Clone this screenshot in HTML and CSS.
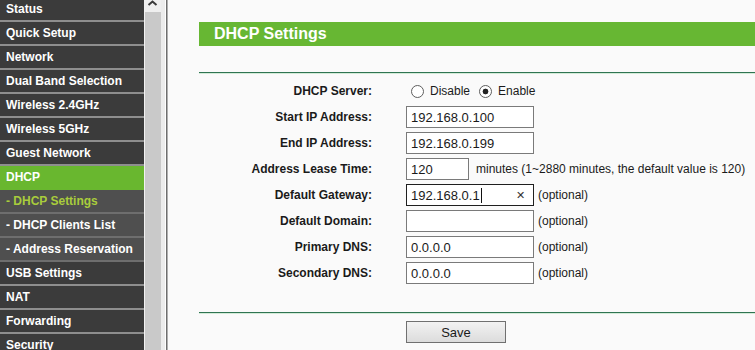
FILE: index.html
```html
<!DOCTYPE html>
<html lang="en">
<head>
    <meta charset="UTF-8">
    <meta name="viewport" content="width=device-width, initial-scale=1.0">
    <title>DHCP Settings</title>
    <link rel="stylesheet" href="styles.css">
</head>
<body>
    <div class="page">
        <nav class="menu">
            <a class="menu-item">Status</a>
            <a class="menu-item">Quick Setup</a>
            <a class="menu-item">Network</a>
            <a class="menu-item">Dual Band Selection</a>
            <a class="menu-item">Wireless 2.4GHz</a>
            <a class="menu-item">Wireless 5GHz</a>
            <a class="menu-item">Guest Network</a>
            <a class="menu-item active">DHCP</a>
            <a class="menu-item sub current">- DHCP Settings</a>
            <a class="menu-item sub">- DHCP Clients List</a>
            <a class="menu-item sub">- Address Reservation</a>
            <a class="menu-item">USB Settings</a>
            <a class="menu-item">NAT</a>
            <a class="menu-item">Forwarding</a>
            <a class="menu-item">Security</a>
        </nav>

        <div class="scrollbar">
            <div class="scroll-up">
                <svg width="15" height="12" viewBox="0 0 15 12">
                    <path d="M3.5 5 L7.5 1.5 L11.5 5" fill="none" stroke="#3a3a3a" stroke-width="2"/>
                </svg>
            </div>
            <div class="scroll-track"></div>
        </div>
        <div class="frame-edge"></div>

        <main class="content">
            <h2 class="title">DHCP Settings</h2>
            <div class="rule"></div>

            <form class="form">
                <label class="label">DHCP Server:</label>
                <div class="field">
                    <label class="radio"><input type="radio" name="server"> Disable</label>
                    <label class="radio"><input type="radio" name="server" checked> Enable</label>
                </div>

                <label class="label">Start IP Address:</label>
                <div class="field"><input class="text" type="text" value="192.168.0.100"></div>

                <label class="label">End IP Address:</label>
                <div class="field"><input class="text" type="text" value="192.168.0.199"></div>

                <label class="label">Address Lease Time:</label>
                <div class="field">
                    <input class="text short" type="text" value="120">
                    <span class="hint">minutes (1~2880 minutes, the default value is 120)</span>
                </div>

                <label class="label">Default Gateway:</label>
                <div class="field">
                    <div class="text focused">
                        <span class="value">192.168.0.1</span><span class="caret"></span>
                        <span class="clear">&#x2715;</span>
                    </div>
                    <span class="note">(optional)</span>
                </div>

                <label class="label">Default Domain:</label>
                <div class="field">
                    <input class="text" type="text" value="">
                    <span class="note">(optional)</span>
                </div>

                <label class="label">Primary DNS:</label>
                <div class="field">
                    <input class="text" type="text" value="0.0.0.0">
                    <span class="note">(optional)</span>
                </div>

                <label class="label">Secondary DNS:</label>
                <div class="field">
                    <input class="text" type="text" value="0.0.0.0">
                    <span class="note">(optional)</span>
                </div>
            </form>

            <div class="rule bottom"></div>
            <div class="actions">
                <button class="save" type="button">Save</button>
            </div>
        </main>
    </div>
</body>
</html>
```

FILE: styles.css
```css
body {
    margin: 0;
    font-family: 'Liberation Sans', Arial, sans-serif;
    font-size: 12px;
    color: #1a1a1a;
    background: #fafafa;
    overflow: hidden;
}

.page {
    display: flex;
    height: 350px;
    overflow: hidden;
}

/* left menu */
.menu {
    width: 144px;
    flex-shrink: 0;
    margin-top: -2px;
    background: #3b3b3b;
}

.menu-item {
    display: block;
    height: 22px;
    line-height: 22px;
    padding-left: 6px;
    border-bottom: 2px solid #8e8e8e;
    background: #3b3b3b;
    color: #fff;
    font-weight: bold;
    white-space: nowrap;
}

.menu-item.active {
    background: #69b72f;
    border-bottom-color: #69b72f;
}

.menu-item.sub {
    background: #4f4f4f;
    border-bottom-color: #6e6e6e;
}

.menu-item.current {
    color: #a9cc3c;
}

/* frame scrollbar */
.scrollbar {
    width: 16px;
    flex-shrink: 0;
    display: flex;
    flex-direction: column;
    border-left: 1px solid #f2f2f2;
    border-right: 4px solid #ececec;
}

.scroll-up {
    height: 12px;
    background: #efefef;
}

.scroll-up svg {
    display: block;
}

.scroll-track {
    flex: 1;
    background: #c9c9c9;
}

.frame-edge {
    width: 1px;
    flex-shrink: 0;
    background: #fff;
    border-right: 1px solid #6e6e6e;
    box-shadow: 1px 0 0 #b0b0b0;
}

/* content */
.content {
    flex: 1;
    padding: 22px 0 0 32px;
    min-width: 0;
}

.title {
    margin: 0;
    height: 24px;
    line-height: 24px;
    padding-left: 15px;
    background: #67b733;
    color: #fff;
    font-size: 16px;
    font-weight: bold;
}

.rule {
    margin-top: 26px;
    border-top: 1px solid #2f7452;
    border-bottom: 1px solid #d3ebd8;
}

.rule.bottom {
    margin-top: 26px;
}

.form {
    display: grid;
    grid-template-columns: 173px 1fr;
    grid-auto-rows: 26px;
    column-gap: 34px;
    margin-top: 4px;
}

.label {
    text-align: right;
    font-weight: bold;
    align-self: center;
}

.field {
    display: flex;
    align-items: center;
    white-space: nowrap;
}

.radio {
    display: flex;
    align-items: center;
    margin-right: 4px;
}

.radio input {
    appearance: none;
    width: 13px;
    height: 13px;
    margin: 0 6px 0 5px;
    border: 1px solid #5e5e5e;
    border-radius: 50%;
    background: #fff;
}

.radio input:checked {
    background: radial-gradient(circle, #222 0 2.6px, #fff 3.2px);
}

.text {
    box-sizing: border-box;
    width: 128px;
    height: 22px;
    margin: 0;
    padding: 0 4px;
    border: 1px solid #7a7a7a;
    background: #fff;
    font-family: 'Liberation Sans', Arial, sans-serif;
    font-size: 13px;
    color: #1a1a1a;
    outline: none;
}

.text.short {
    width: 63px;
}

.text.focused {
    display: flex;
    align-items: center;
    border-color: #1f1f1f;
}

.caret {
    width: 1px;
    height: 15px;
    margin-left: 1px;
    background: #111;
}

.clear {
    margin-left: auto;
    margin-right: 4px;
    font-size: 11px;
    color: #333;
}

.hint {
    margin-left: 7px;
}

.note {
    margin-left: 4px;
}

.actions {
    padding: 7px 0 0 207px;
}

.save {
    width: 100px;
    height: 22px;
    border: 1px solid #707070;
    background: linear-gradient(#f2f2f2, #dcdcdc);
    font-family: 'Liberation Sans', Arial, sans-serif;
    font-size: 13px;
    color: #1a1a1a;
    padding: 0;
}
```
